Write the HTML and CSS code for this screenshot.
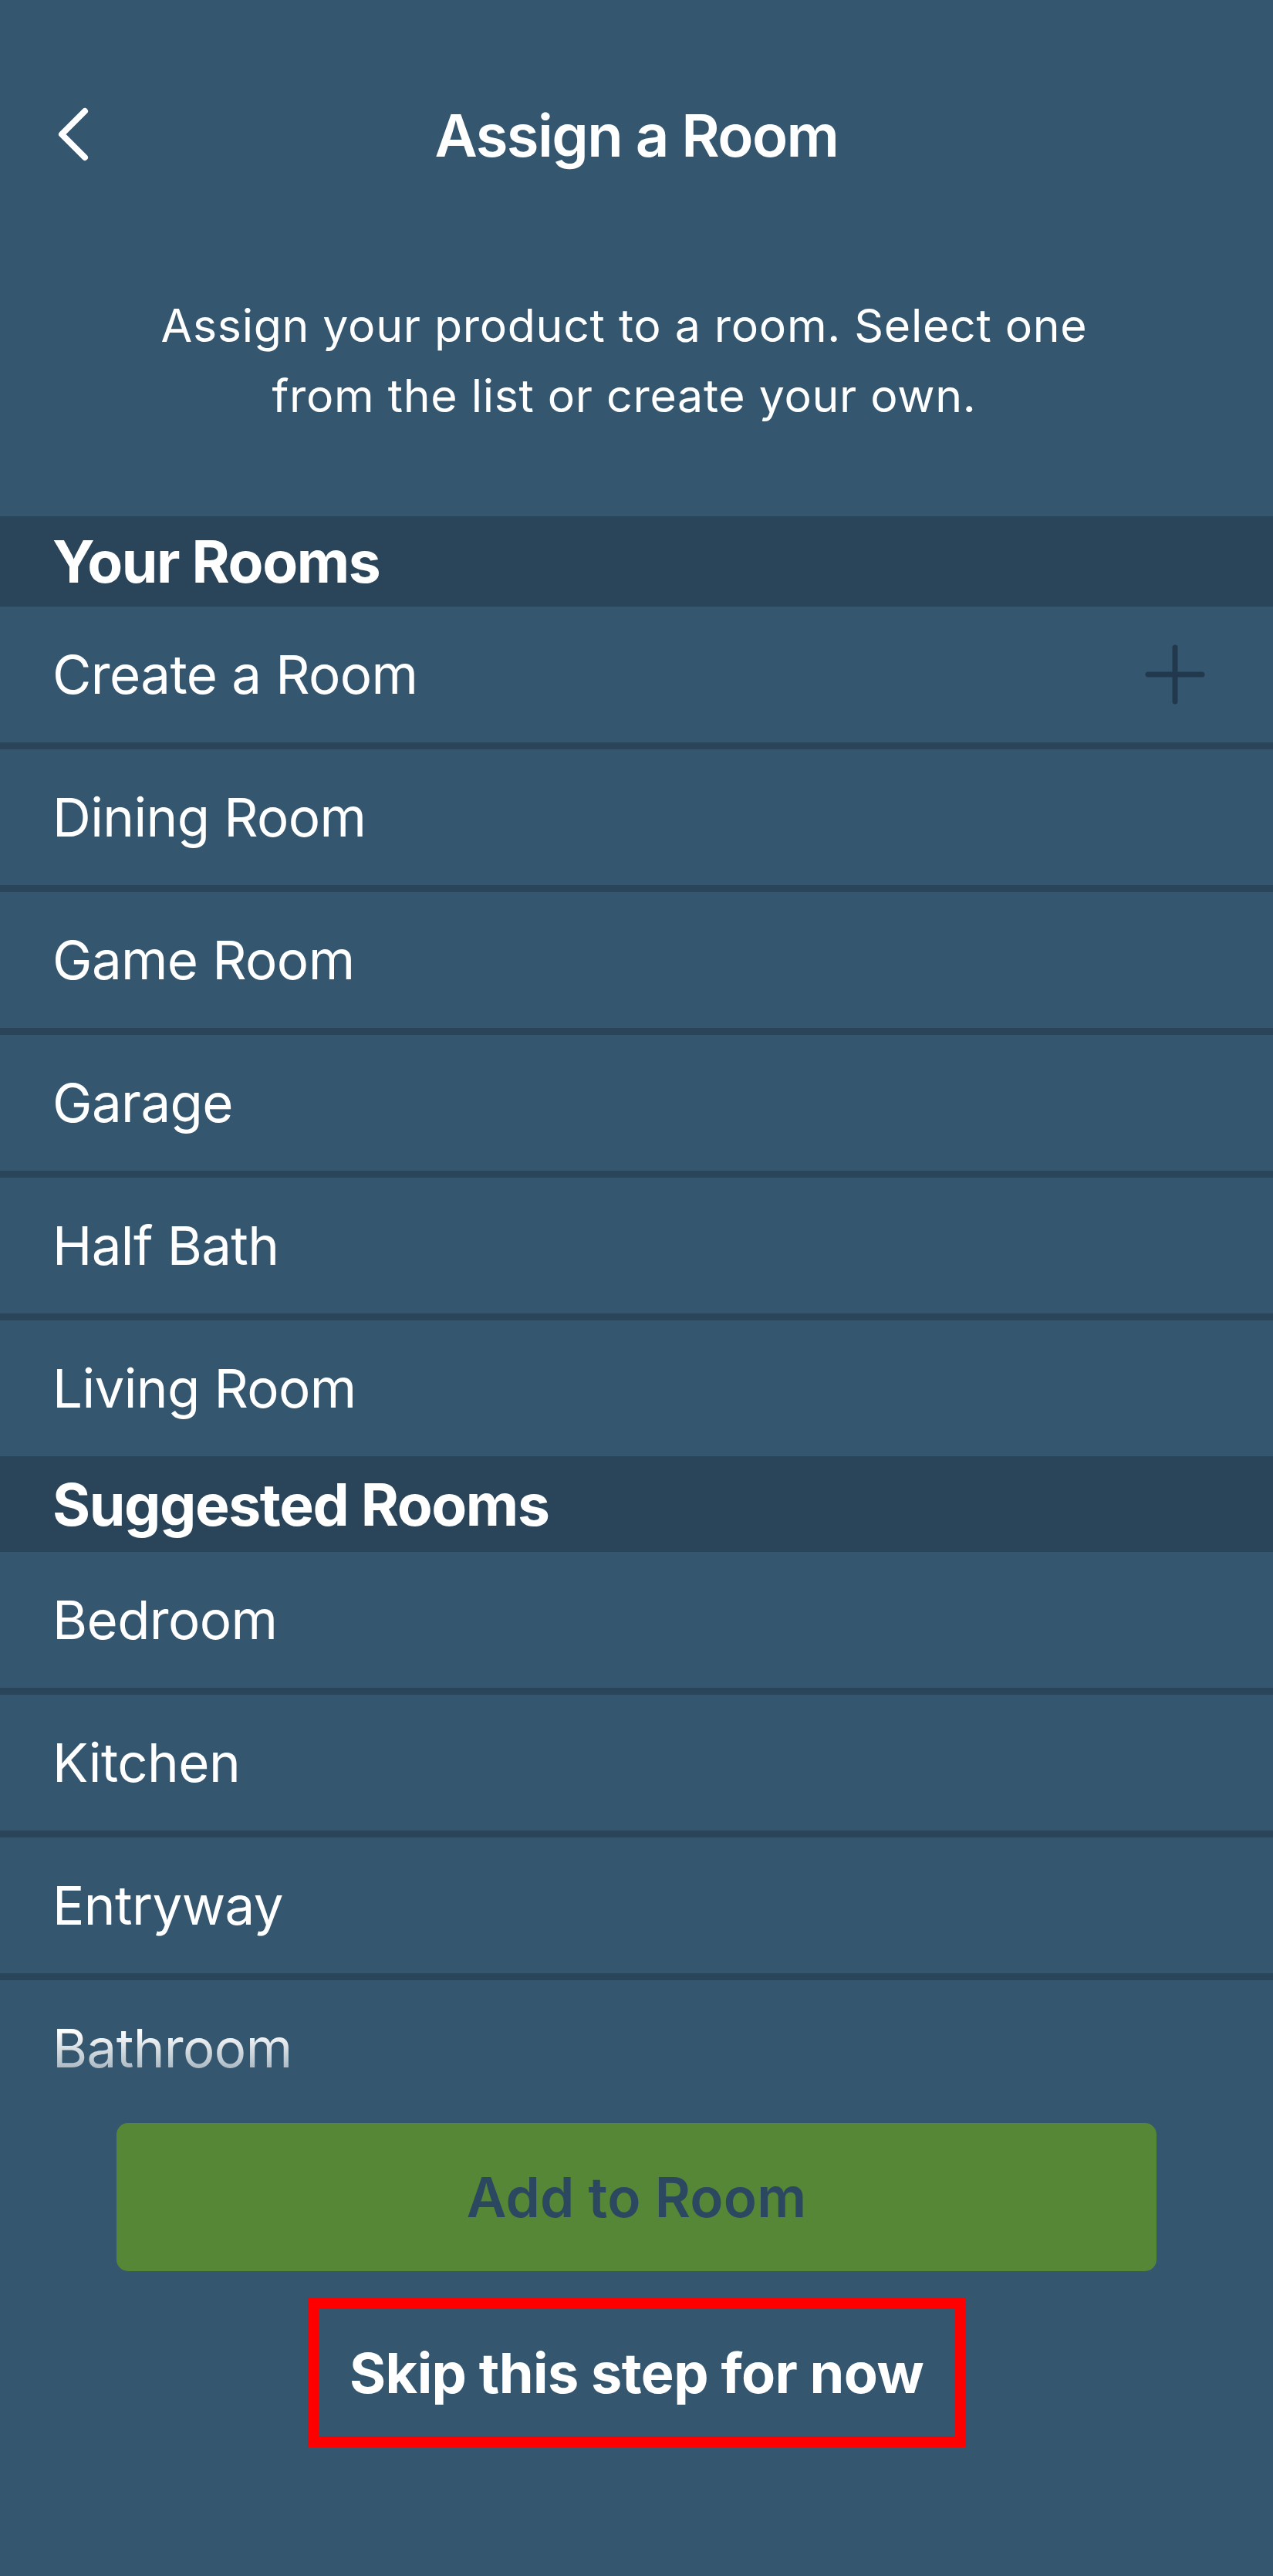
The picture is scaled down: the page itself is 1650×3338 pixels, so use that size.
FILE: index.html
```html
<!DOCTYPE html>
<html lang="en">
<head>
<meta charset="utf-8">
<title>Assign a Room</title>
<link rel="stylesheet" href="styles.css">
</head>
<body>
<div class="screen">
  <header class="nav">
    <button class="back" aria-label="Back">
      <svg viewBox="0 0 44 70" width="44" height="70"><path d="M36 5 L6 35 L36 65" fill="none" stroke="#fff" stroke-width="8" stroke-linecap="round" stroke-linejoin="round"/></svg>
    </button>
    <h1 class="title">Assign a Room</h1>
  </header>
  <p class="intro">Assign your product to a room. Select one<br>from the list or create your own.</p>

  <div class="list">
    <div class="section-head">Your Rooms</div>
    <div class="group">
      <div class="row">
        <span>Create a Room</span>
        <svg class="plus" viewBox="0 0 78 78" width="78" height="78"><path d="M39 4 V74 M4 39 H74" fill="none" stroke="#22384c" stroke-width="7" stroke-linecap="round"/></svg>
      </div>
      <div class="row"><span>Dining Room</span></div>
      <div class="row"><span>Game Room</span></div>
      <div class="row"><span>Garage</span></div>
      <div class="row"><span>Half Bath</span></div>
      <div class="row"><span>Living Room</span></div>
    </div>
    <div class="section-head tall">Suggested Rooms</div>
    <div class="group">
      <div class="row"><span>Bedroom</span></div>
      <div class="row"><span>Kitchen</span></div>
      <div class="row"><span>Entryway</span></div>
      <div class="row"><span>Bathroom</span></div>
    </div>
  </div>

  <footer class="actions">
    <button class="primary">Add to Room</button>
    <button class="skip">Skip this step for now</button>
  </footer>
</div>
</body>
</html>
```

FILE: styles.css
```css
* { box-sizing: border-box; }

html, body {
  margin: 0;
  padding: 0;
  background: #35566f;
}

body {
  font-family: Inter, "Noto Sans", sans-serif;
  color: #ffffff;
}

.screen {
  width: 1650px;
  height: 3338px;
  display: flex;
  flex-direction: column;
  background: #35566f;
  overflow: hidden;
}

.nav {
  height: 350px;
  display: flex;
  align-items: center;
  justify-content: center;
  position: relative;
  flex: none;
}

.back {
  position: absolute;
  left: 74px;
  top: 139px;
  width: 44px;
  height: 70px;
  padding: 0;
  border: 0;
  background: none;
  display: block;
}

.back svg { display: block; }

.title {
  margin: 0;
  font-size: 76px;
  font-weight: 600;
  line-height: 1;
  letter-spacing: -1.6px;
}

.intro {
  margin: 26px 0 111px;
  padding: 0 32px 0 0;
  text-align: center;
  font-size: 59px;
  line-height: 91px;
  font-weight: 400;
  letter-spacing: 0.7px;
  flex: none;
}

.list {
  height: 2082px;
  flex: none;
  overflow: hidden;
  position: relative;
}

.list::after {
  content: "";
  position: absolute;
  left: 0;
  right: 0;
  bottom: 0;
  height: 120px;
  background: linear-gradient(to bottom, rgba(53, 86, 111, 0) 0%, rgba(53, 86, 111, 1) 100%);
}

.section-head {
  height: 117px;
  display: flex;
  align-items: center;
  padding-left: 68px;
  background: #2a4559;
  font-size: 75px;
  font-weight: 700;
  letter-spacing: -1.4px;
}

.section-head.tall { height: 124px; }

.row {
  height: 185px;
  display: flex;
  align-items: center;
  justify-content: space-between;
  padding: 0 88px 0 68px;
  font-size: 69px;
  font-weight: 400;
  letter-spacing: -0.6px;
}

.row + .row {
  border-top: 9px solid #2a4559;
}

.row:first-child { height: 176px; }

.plus { display: block; flex: none; }

.actions {
  flex: none;
  display: flex;
  flex-direction: column;
  align-items: center;
}

.primary {
  width: 1348px;
  height: 192px;
  border: 0;
  border-radius: 15px;
  background: #558737;
  color: #2c4861;
  font-family: inherit;
  font-size: 71px;
  font-weight: 600;
  letter-spacing: 0.2px;
}

.skip {
  margin-top: 35px;
  width: 853px;
  height: 193px;
  border: 14px solid #ff0000;
  background: transparent;
  color: #ffffff;
  font-family: inherit;
  font-size: 72px;
  font-weight: 700;
  letter-spacing: -0.6px;
  padding: 0;
}
```
